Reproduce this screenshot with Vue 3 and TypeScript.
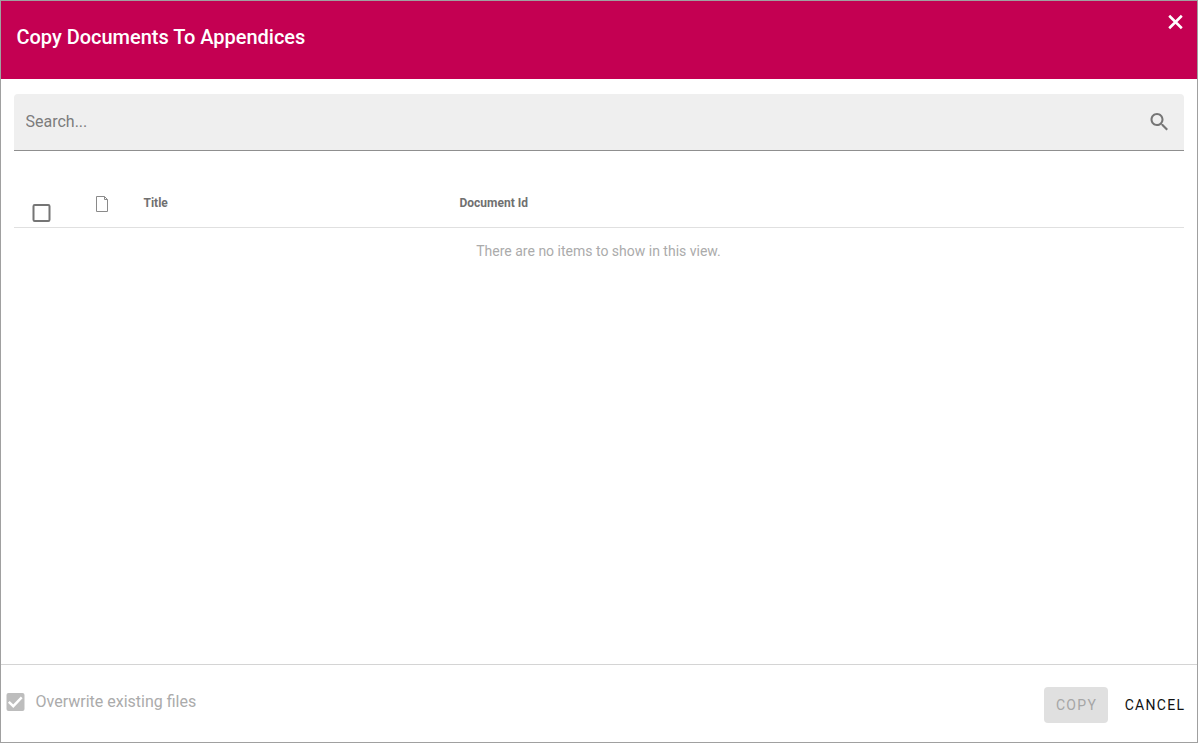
<script setup lang="ts">
import { ref } from 'vue'

const query = ref('')
const columns: string[] = ['Title', 'Document Id']
</script>

<template>
  <div class="dialog">
    <header class="header">
      <h1 class="heading">Copy Documents To Appendices</h1>
      <button class="close" aria-label="Close">
        <svg width="16" height="16" viewBox="0 0 16 16">
          <path d="M1.2 1.8L13.8 14.2M13.8 1.8L1.2 14.2" stroke="#fff" stroke-width="2.6" fill="none" />
        </svg>
      </button>
    </header>

    <main class="content">
      <div class="search">
        <input v-model="query" class="search-input" type="text" placeholder="Search..." />
        <svg class="search-icon" width="24" height="24" viewBox="-0.5 0 24 24">
          <path
            fill="#757575"
            d="M15.5 14h-.79l-.28-.27C15.41 12.59 16 11.11 16 9.5 16 5.91 13.09 3 9.5 3S3 5.91 3 9.5 5.91 16 9.5 16c1.61 0 3.09-.59 4.23-1.57l.27.28v.79l5 4.99L20.49 19l-4.99-5zm-6 0C7.01 14 5 11.99 5 9.5S7.01 5 9.5 5 14 7.01 14 9.5 11.99 14 9.5 14z"
          />
        </svg>
      </div>

      <div class="table-head">
        <div class="select-cell">
          <svg width="19" height="18" viewBox="0 0 19 18">
            <rect x="1.5" y="1" width="16" height="16" rx="1.2" stroke="#757575" stroke-width="2" fill="none" />
          </svg>
        </div>
        <div class="icon-cell">
          <svg width="12" height="16" viewBox="0 0 12 16">
            <path d="M.5.5H8.5L11.5 3.5V15.5H.5ZM8.5.5V3.5H11.5" stroke="#8a8a8a" stroke-width="1" fill="none" />
          </svg>
        </div>
        <div v-for="column in columns" :key="column" class="column">{{ column }}</div>
      </div>
      <p class="empty">There are no items to show in this view.</p>
    </main>

    <footer class="footer">
      <div class="overwrite">
        <svg class="checked" width="19" height="18" viewBox="0 0 19 18">
          <rect x="0.5" y="0" width="18" height="18" rx="2" fill="#bdbdbd" />
          <path d="M2.8 8.8L7.3 13.2L15.7 4.4" stroke="#fff" stroke-width="2.4" fill="none" />
        </svg>
        <span class="overwrite-label">Overwrite existing files</span>
      </div>
      <div class="actions">
        <button class="button copy" disabled>COPY</button>
        <button class="button cancel">CANCEL</button>
      </div>
    </footer>
  </div>
</template>

<style>
body {
  margin: 0;
  background: #fff;
}
</style>

<style scoped>
.dialog {
  box-sizing: border-box;
  width: 100%;
  height: 100vh;
  border: 1px solid #a0a0a0;
  display: flex;
  flex-direction: column;
  font-family: Roboto, sans-serif;
  overflow: hidden;
}
button {
  border: 0;
  padding: 0;
  background: none;
  font-family: inherit;
}
.header {
  height: 78px;
  flex: none;
  box-sizing: border-box;
  padding: 13px 13px 0 15.5px;
  background: #c40052;
  display: flex;
  justify-content: space-between;
  align-items: flex-start;
}
.heading {
  margin: 7px 0 0;
  font-size: 20px;
  line-height: 32px;
  font-weight: 500;
  letter-spacing: -0.02px;
  color: #fff;
}
.close {
  width: 16px;
  height: 16px;
}
.close svg {
  display: block;
}
.content {
  flex: 1;
  padding: 15px 13px 0;
}
.search {
  box-sizing: border-box;
  height: 57px;
  padding: 0 13px 0 11.5px;
  display: flex;
  align-items: center;
  background: #efefef;
  border-bottom: 1px solid #8f8f8f;
  border-radius: 4px 4px 0 0;
}
.search-input {
  flex: 1;
  height: 30px;
  margin: 0 0 2px;
  padding: 0;
  border: 0;
  outline: 0;
  background: transparent;
  font-family: inherit;
  font-size: 16px;
}
.search-input::placeholder {
  color: #7c7c7c;
  opacity: 1;
}
.table-head {
  box-sizing: border-box;
  height: 49px;
  margin-top: 28px;
  display: flex;
  border-bottom: 1px solid #e0e0e0;
}
.select-cell {
  width: 82px;
  padding: 25px 0 0 18px;
  box-sizing: border-box;
}
.select-cell svg {
  display: block;
}
.icon-cell {
  width: 47.5px;
  padding-top: 17px;
}
.icon-cell svg {
  display: block;
}
.column {
  width: 316px;
  padding-top: 16px;
  font-size: 12px;
  line-height: 16px;
  font-weight: 700;
  color: #707070;
}
.empty {
  margin: 13px 1px 0 0;
  text-align: center;
  font-size: 14px;
  line-height: 20px;
  color: #ababab;
}
.footer {
  box-sizing: border-box;
  height: 78px;
  flex: none;
  padding: 22px 0 0 5px;
  border-top: 1px solid #d4d4d4;
  display: flex;
  justify-content: space-between;
  align-items: flex-start;
}
.overwrite {
  display: flex;
  align-items: center;
  margin-top: 2px;
  height: 26px;
}
.checked {
  display: block;
}
.overwrite-label {
  margin-left: 10.5px;
  font-size: 16px;
  line-height: 24px;
  color: #ababab;
}
.actions {
  display: flex;
}
.button {
  height: 36px;
  font-size: 14px;
  line-height: 36px;
  font-weight: 400;
  letter-spacing: 1.3px;
}
.copy {
  width: 64px;
  padding-left: 1px;
  border-radius: 4px;
  background: #e0e0e0;
  color: #a6a6a6;
}
.cancel {
  width: 89px;
  padding-left: 5px;
  color: #111;
}
</style>
